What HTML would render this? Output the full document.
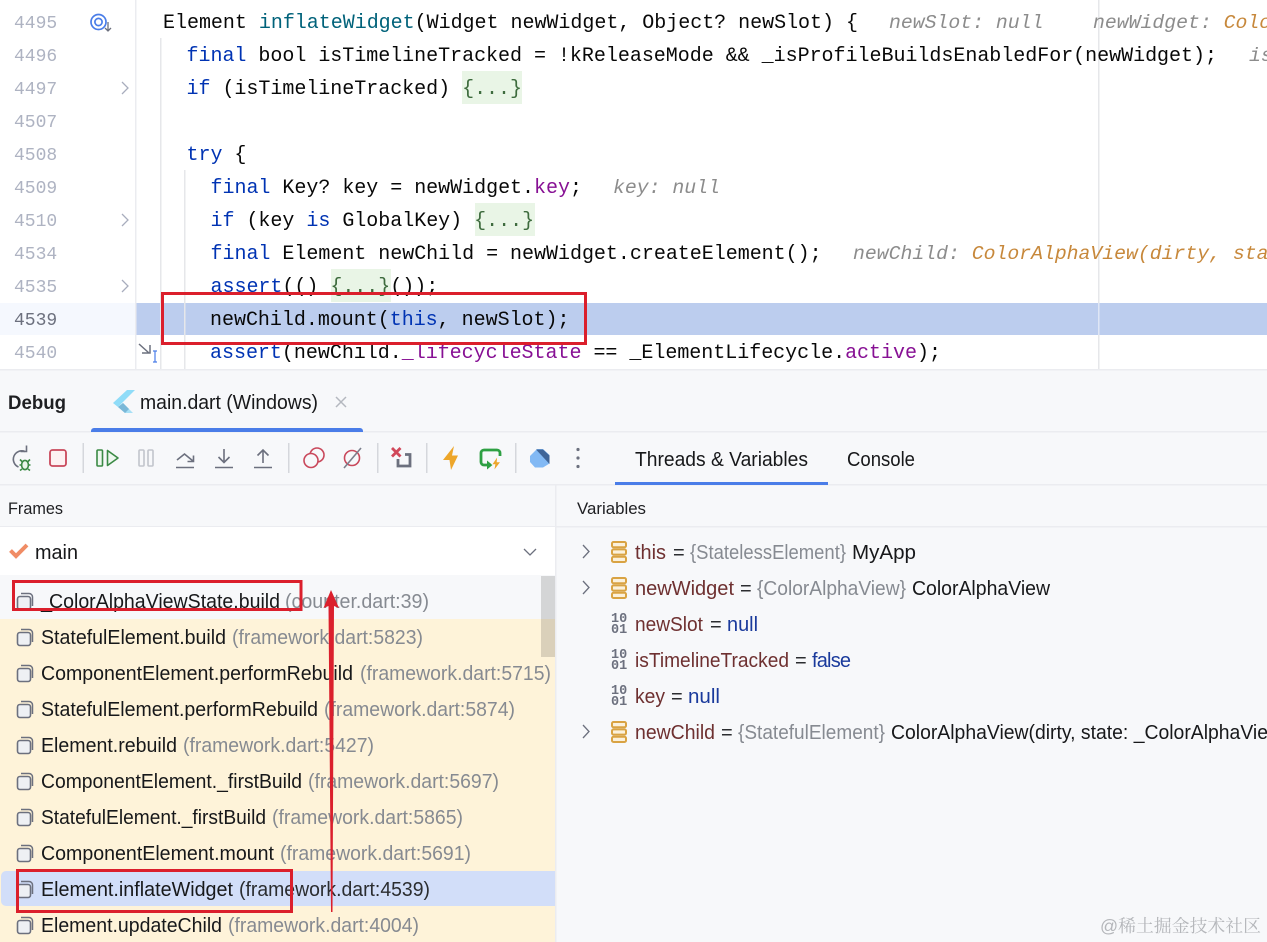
<!DOCTYPE html>
<html><head><meta charset="utf-8"><style>
html,body{margin:0;padding:0;width:1267px;height:942px;overflow:hidden;background:#fff}
svg{display:block}
text{white-space:pre}
.c{font:20px "Liberation Mono",monospace;fill:#080808;letter-spacing:-.02px}
.k{fill:#0033b3}.t{fill:#00627a}.p{fill:#871094}.gr{fill:#3d6b3d}
.i{font:italic 19.8px "Liberation Mono",monospace;fill:#8c8c8c}
.o{fill:#c7883b}
.n{font:18px "Liberation Mono",monospace;fill:#aeb3c2}
.s{font:20px "Liberation Sans",sans-serif;fill:#17181a}
.f{font:20px "Liberation Sans",sans-serif;fill:#868a91}
.h{font:17px "Liberation Sans",sans-serif;fill:#1e1f22}
.v{fill:#6e3030}.b{fill:#1a3a9c}.e{fill:#2b2d30}
.d{font:bold 13.5px "Liberation Mono",monospace;fill:#6c707e}
</style></head><body>
<svg width="1267" height="942" viewBox="0 0 1267 942" xmlns="http://www.w3.org/2000/svg">
<!-- editor -->
<rect width="1267" height="370" fill="#fff"/>
<rect x="0" y="303" width="135" height="32" fill="#f5f8fe"/>
<rect x="136" y="303" width="1131" height="32" fill="#bccdee"/>
<rect x="135" y="0" width="1.5" height="370" fill="#ebecf0"/>
<rect x="160" y="38" width="1.5" height="332" fill="#e6e7ea"/>
<rect x="184" y="170" width="1.5" height="200" fill="#e6e7ea"/>
<rect x="1098" y="0" width="1.5" height="370" fill="#e6e7ea"/>
<rect x="1098" y="303" width="1.5" height="32" fill="#dfe6f5"/>
<rect x="462" y="71" width="60" height="33" fill="#e9f5e6"/>
<rect x="475" y="203" width="60" height="33" fill="#e9f5e6"/>
<rect x="331" y="269" width="60" height="33" fill="#e9f5e6"/>
<g class="n">
<text x="14" y="28" class="n">4495</text><text x="14" y="61" class="n">4496</text><text x="14" y="94" class="n">4497</text><text x="14" y="127" class="n">4507</text><text x="14" y="160" class="n">4508</text><text x="14" y="193" class="n">4509</text><text x="14" y="226" class="n">4510</text><text x="14" y="259" class="n">4534</text><text x="14" y="292" class="n">4535</text><text x="14" y="325" class="n" style="fill:#6c707e">4539</text><text x="14" y="358" class="n">4540</text>
</g>
<!-- gutter icons -->
<circle cx="98.500" cy="22" r="7.500" fill="none" stroke="#4a7de8" stroke-width="1.700"/>
<circle cx="98.500" cy="22" r="3.600" fill="none" stroke="#4a7de8" stroke-width="1.700"/>
<path d="M108 22v9M105 28l3 3 3-3" fill="none" stroke="#6c707e" stroke-width="1.300"/>
<path d="M122 82l6 6-6 6M122 214l6 6-6 6M122 280l6 6-6 6" fill="none" stroke="#a8adbd" stroke-width="1.300"/>
<path d="M139 344l10 9M150 345v8h-8" fill="none" stroke="#6c707e" stroke-width="1.500"/>
<path d="M153 351h4M155 351v11M153 362h4" fill="none" stroke="#4a7de8" stroke-width="1.200"/>
<!-- code -->
<text class="c" x="163" y="28">Element <tspan class="t">inflateWidget</tspan>(Widget newWidget, Object? newSlot) {</text>
<text class="i" x="889" y="28">newSlot: null</text>
<text class="i" x="1093" y="28">newWidget: <tspan class="o">Colo</tspan></text>
<text class="c" x="186.500" y="61"><tspan class="k">final</tspan> bool isTimelineTracked = !kReleaseMode &amp;&amp; _isProfileBuildsEnabledFor(newWidget);</text>
<text class="i" x="1249" y="61">is</text>
<text class="c" x="186.500" y="94"><tspan class="k">if</tspan> (isTimelineTracked) <tspan class="gr">{...}</tspan></text>
<text class="c" x="186.500" y="160"><tspan class="k">try</tspan> {</text>
<text class="c" x="210.500" y="193"><tspan class="k">final</tspan> Key? key = newWidget.<tspan class="p">key</tspan>;</text>
<text class="i" x="613" y="193">key: null</text>
<text class="c" x="210.500" y="226"><tspan class="k">if</tspan> (key <tspan class="k">is</tspan> GlobalKey) <tspan class="gr">{...}</tspan></text>
<text class="c" x="210.500" y="259"><tspan class="k">final</tspan> Element newChild = newWidget.createElement();</text>
<text class="i" x="853" y="259">newChild: <tspan class="o">ColorAlphaView(dirty, sta</tspan></text>
<text class="c" x="210.500" y="292"><tspan class="k">assert</tspan>(() <tspan class="gr">{...}</tspan>());</text>
<text class="c" x="210" y="325">newChild.mount(<tspan class="k">this</tspan>, newSlot);</text>
<text class="c" x="210" y="358"><tspan class="k">assert</tspan>(newChild.<tspan class="p">_lifecycleState</tspan> == _ElementLifecycle.<tspan class="p">active</tspan>);</text>
<!-- panel -->
<rect x="0" y="369" width="1267" height="573" fill="#f7f8fa"/>
<rect x="0" y="369" width="1267" height="1.500" fill="#ebecf0"/>
<rect x="0" y="431" width="1267" height="1.500" fill="#ebecf0"/>
<rect x="0" y="484" width="1267" height="1.500" fill="#ebecf0"/>
<rect x="0" y="526" width="1267" height="1.500" fill="#ebecf0"/>
<rect x="0" y="527" width="555" height="48" fill="#fff"/>
<rect x="0" y="575" width="555" height="44" fill="#f7f8fa"/>
<rect x="0" y="619" width="555" height="323" fill="#fef3d9"/>
<path d="M555 906H6a5 5 0 0 1-5-5V876a5 5 0 0 1 5-5H555z" fill="#d2def9"/>
<rect x="555" y="485" width="1.500" height="457" fill="#ebecf0"/>
<rect x="541" y="576" width="14" height="81" fill="#000" fill-opacity=".14"/>
<!-- tabs -->
<text x="8" y="409" style="font:bold 19.500px 'Liberation Sans',sans-serif;fill:#1e1f22" textLength="58" lengthAdjust="spacingAndGlyphs">Debug</text>
<path d="M127 390l-14 13 5 4 17-17z" fill="#8fdcf8"/>
<path d="M123 403l-5 4 7 6h8z" fill="#a8e0f6"/>
<path d="M118 407l5-4 6 6-4 4z" fill="#7ab8d8"/>
<text x="140" y="409" class="s" textLength="178" lengthAdjust="spacingAndGlyphs">main.dart (Windows)</text>
<path d="M336 397l10 10M346 397l-10 10" stroke="#b4b8bf" stroke-width="1.500" fill="none"/>
<path d="M91 432v-1a3 3 0 0 1 3-3H360a3 3 0 0 1 3 3v1z" fill="#4a7de8"/>
<!-- toolbar -->
<g fill="none" stroke-width="1.600">
<path d="M25 451.500A8.300 8.300 0 1 0 18.500 467" stroke="#6c707e"/><path d="M20.500 451.500H26.500V445.500" stroke="#6c707e"/>
<ellipse cx="25" cy="465" rx="3.400" ry="4.600" stroke="#3b8a45" fill="#e8f5e9"/><path d="M20 459.500l2.500 2.500M30 459.500l-2.500 2.500M19.500 465h2M28.500 465h2M20 470.500l2-1.500M30 470.500l-2-1.500" stroke="#3b8a45"/>
<rect x="50" y="450" width="16" height="16" rx="2.500" stroke="#c9485b" fill="#fdf1f2" stroke-width="1.800"/>
<rect x="97" y="450" width="5.500" height="16" rx="1" stroke="#3b8a45" fill="#eef8ef"/>
<path d="M107.500 450.500v15L118 458z" stroke="#3b8a45" fill="#eef8ef" stroke-linejoin="round"/>
<rect x="139" y="450" width="5" height="16" rx="1" stroke="#c2c5cc"/><rect x="148" y="450" width="5" height="16" rx="1" stroke="#c2c5cc"/>
<path d="M176 467.500h18M177 460l7.500-6 8.500 7M193.500 455.500v6h-6" stroke="#6c707e"/>
<path d="M215 467.500h18M224 449v13M218.500 457l5.500 5.500 5.500-5.500" stroke="#6c707e"/>
<path d="M254 467.500h18M263 463v-13M257.500 455.500l5.500-5.500 5.500 5.500" stroke="#6c707e"/>
<circle cx="317" cy="455" r="7" stroke="#c9485b"/><circle cx="311" cy="460.500" r="7" stroke="#c9485b" fill="#f7f8fa"/>
<circle cx="352" cy="458" r="7.500" stroke="#c9485b"/><path d="M344 468l17-20" stroke="#7b7f8c"/>
<path d="M405 454.500h5V466h-12v-7" stroke="#6c707e" stroke-width="2.800"/>
<path d="M392 448l8.500 8.500M400.500 448l-8.500 8.500" stroke="#d1485a" stroke-width="2.800"/>
<path d="M500 456v-3a3 3 0 0 0-3-3h-13a3 3 0 0 0-3 3v9a3 3 0 0 0 3 3h4" stroke="#2ea043" stroke-width="2.800"/>
</g>
<path d="M487 460.500l5.500 4.500-5.500 4.500z" fill="#2ea043"/>
<g fill="#d5d7dc"><rect x="82.500" y="443" width="1.500" height="30"/><rect x="288" y="443" width="1.500" height="30"/><rect x="377" y="443" width="1.500" height="30"/><rect x="426" y="443" width="1.500" height="30"/><rect x="515" y="443" width="1.500" height="30"/></g>
<path d="M454 446L443 460h6.500L451 470l7-14.500h-6z" fill="#eda62a"/>
<path d="M497.500 456.500l-5.500 8h3l-1 6 6.500-8.500h-3.500z" fill="#eda62a" stroke="#f7f8fa" stroke-width=".6"/>
<path d="M530 456l7-7h6l6.500 6v8.500L543 467.500h-8L530 462z" fill="#82b9f4"/>
<path d="M536 449.500h7l6.500 6v8.500z" fill="#3f6598"/>
<circle cx="578" cy="449.500" r="1.600" fill="#6c707e"/><circle cx="578" cy="458" r="1.600" fill="#6c707e"/><circle cx="578" cy="466.500" r="1.600" fill="#6c707e"/>
<text x="635" y="466" class="s" textLength="173" lengthAdjust="spacingAndGlyphs">Threads &amp; Variables</text>
<text x="847" y="466" class="s" textLength="68" lengthAdjust="spacingAndGlyphs">Console</text>
<rect x="615" y="482" width="213" height="3" fill="#4a7de8"/>
<text x="8" y="514" class="h" textLength="55" lengthAdjust="spacingAndGlyphs">Frames</text>
<text x="577" y="514" class="h" textLength="69" lengthAdjust="spacingAndGlyphs">Variables</text>
<!-- main -->
<path d="M10.500 550.500l5.500 5.500 11-11" fill="none" stroke="#f08c65" stroke-width="4"/>
<text x="35" y="559" class="s" textLength="43" lengthAdjust="spacingAndGlyphs">main</text>
<path d="M524 549l6 6 6-6" fill="none" stroke="#6c707e" stroke-width="1.300"/>
<!-- frame icons -->
<defs><g id="fr"><path d="M21 -7.500h8a3.500 3.500 0 0 1 3.500 3.500v9" fill="none" stroke="#6c707e" stroke-width="1.500"/><rect x="17.500" y="-4.500" width="13" height="13" rx="2.500" fill="#eef0f4" stroke="#6c707e" stroke-width="1.600"/></g>
<g id="st" fill="#fbf1dc" stroke="#d9a343" stroke-width="2"><rect x="612" y="-10" width="14" height="5.200" rx="1.500"/><rect x="612" y="-2.600" width="14" height="5.200" rx="1.500"/><rect x="612" y="4.800" width="14" height="5.200" rx="1.500"/></g></defs>
<use href="#fr" y="601"/><use href="#fr" y="637"/><use href="#fr" y="673"/><use href="#fr" y="709"/><use href="#fr" y="745"/><use href="#fr" y="781"/><use href="#fr" y="817"/><use href="#fr" y="853"/><use href="#fr" y="889"/><use href="#fr" y="925"/>
<text x="41" y="608" class="s">_</text><text x="49" y="608" class="s" textLength="231" lengthAdjust="spacingAndGlyphs">ColorAlphaViewState.build</text><text x="285" y="608" class="f" textLength="144" lengthAdjust="spacingAndGlyphs">(counter.dart:39)</text>
<text x="41" y="644" class="s" textLength="185" lengthAdjust="spacingAndGlyphs">StatefulElement.build</text><text x="232" y="644" class="f" textLength="191" lengthAdjust="spacingAndGlyphs">(framework.dart:5823)</text>
<text x="41" y="680" class="s" textLength="312" lengthAdjust="spacingAndGlyphs">ComponentElement.performRebuild</text><text x="360" y="680" class="f" textLength="191" lengthAdjust="spacingAndGlyphs">(framework.dart:5715)</text>
<text x="41" y="716" class="s" textLength="277" lengthAdjust="spacingAndGlyphs">StatefulElement.performRebuild</text><text x="324" y="716" class="f" textLength="191" lengthAdjust="spacingAndGlyphs">(framework.dart:5874)</text>
<text x="41" y="752" class="s" textLength="136" lengthAdjust="spacingAndGlyphs">Element.rebuild</text><text x="183" y="752" class="f" textLength="191" lengthAdjust="spacingAndGlyphs">(framework.dart:5427)</text>
<text x="41" y="788" class="s" textLength="261" lengthAdjust="spacingAndGlyphs">ComponentElement._firstBuild</text><text x="308" y="788" class="f" textLength="191" lengthAdjust="spacingAndGlyphs">(framework.dart:5697)</text>
<text x="41" y="824" class="s" textLength="225" lengthAdjust="spacingAndGlyphs">StatefulElement._firstBuild</text><text x="272" y="824" class="f" textLength="191" lengthAdjust="spacingAndGlyphs">(framework.dart:5865)</text>
<text x="41" y="860" class="s" textLength="233" lengthAdjust="spacingAndGlyphs">ComponentElement.mount</text><text x="280" y="860" class="f" textLength="191" lengthAdjust="spacingAndGlyphs">(framework.dart:5691)</text>
<text x="41" y="896" class="s" textLength="192" lengthAdjust="spacingAndGlyphs">Element.inflateWidget</text><text x="239" y="896" class="s" style="fill:#2b2d30" textLength="191" lengthAdjust="spacingAndGlyphs">(framework.dart:4539)</text>
<text x="41" y="932" class="s" textLength="181" lengthAdjust="spacingAndGlyphs">Element.updateChild</text><text x="228" y="932" class="f" textLength="191" lengthAdjust="spacingAndGlyphs">(framework.dart:4004)</text>
<!-- variables -->
<path d="M583 545l6 6.500-6 6.500M583 581l6 6.500-6 6.500M583 725l6 6.500-6 6.500" fill="none" stroke="#6c707e" stroke-width="1.300"/>
<use href="#st" y="552"/><use href="#st" y="588"/><use href="#st" y="732"/>
<text class="d" x="611" y="622">10</text><text class="d" x="611" y="633">01</text>
<text class="d" x="611" y="658">10</text><text class="d" x="611" y="669">01</text>
<text class="d" x="611" y="694">10</text><text class="d" x="611" y="705">01</text>
<text x="635" y="559" class="s v" textLength="31" lengthAdjust="spacingAndGlyphs">this</text><text x="673" y="559" class="s e">=</text><text x="690" y="559" class="f" textLength="156" lengthAdjust="spacingAndGlyphs">{StatelessElement}</text><text x="852" y="559" class="s" textLength="64" lengthAdjust="spacingAndGlyphs">MyApp</text>
<text x="635" y="595" class="s v" textLength="99" lengthAdjust="spacingAndGlyphs">newWidget</text><text x="740" y="595" class="s e">=</text><text x="757" y="595" class="f" textLength="149" lengthAdjust="spacingAndGlyphs">{ColorAlphaView}</text><text x="912" y="595" class="s" textLength="138" lengthAdjust="spacingAndGlyphs">ColorAlphaView</text>
<text x="635" y="631" class="s v" textLength="68" lengthAdjust="spacingAndGlyphs">newSlot</text><text x="710" y="631" class="s e">=</text><text x="727" y="631" class="s b" textLength="31" lengthAdjust="spacingAndGlyphs">null</text>
<text x="635" y="667" class="s v" textLength="154" lengthAdjust="spacingAndGlyphs">isTimelineTracked</text><text x="795" y="667" class="s e">=</text><text x="812" y="667" class="s b" textLength="39" lengthAdjust="spacing">false</text>
<text x="635" y="703" class="s v" textLength="30" lengthAdjust="spacingAndGlyphs">key</text><text x="671" y="703" class="s e">=</text><text x="688" y="703" class="s b" textLength="32" lengthAdjust="spacingAndGlyphs">null</text>
<text x="635" y="739" class="s v" textLength="80" lengthAdjust="spacingAndGlyphs">newChild</text><text x="721" y="739" class="s e">=</text><text x="738" y="739" class="f" textLength="147" lengthAdjust="spacingAndGlyphs">{StatefulElement}</text><text x="891" y="739" class="s" textLength="391" lengthAdjust="spacingAndGlyphs">ColorAlphaView(dirty, state: _ColorAlphaView</text>
<!-- watermark -->
<text x="1100" y="932" style="font:17.500px 'Liberation Sans','Noto Serif CJK SC',serif;fill:#b4b6ba" textLength="161" lengthAdjust="spacingAndGlyphs">@稀土掘金技术社区</text>
<!-- annotations -->
<g fill="none" stroke="#db1f2c" stroke-width="3">
<rect x="162.500" y="293.500" width="423" height="50"/>
<rect x="13.500" y="581.500" width="287.500" height="28"/>
<rect x="17.500" y="870.500" width="274" height="41"/>
</g>
<path d="M331 590l8 18-5 -2-1.500 306h-1.500l-2.500-306-5 2z" fill="#db1f2c"/>
</svg>
</body></html>
